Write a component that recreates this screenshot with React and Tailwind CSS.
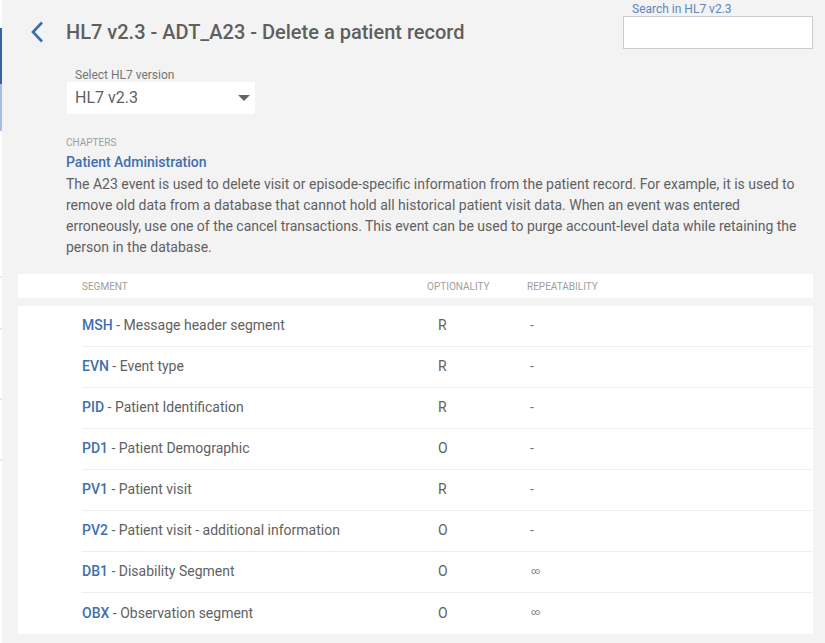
import React from 'react';

const segments = [
  { code: 'MSH', name: 'Message header segment', opt: 'R', rep: '-' },
  { code: 'EVN', name: 'Event type', opt: 'R', rep: '-' },
  { code: 'PID', name: 'Patient Identification', opt: 'R', rep: '-' },
  { code: 'PD1', name: 'Patient Demographic', opt: 'O', rep: '-' },
  { code: 'PV1', name: 'Patient visit', opt: 'R', rep: '-' },
  { code: 'PV2', name: 'Patient visit - additional information', opt: 'O', rep: '-' },
  { code: 'DB1', name: 'Disability Segment', opt: 'O', rep: '∞' },
  { code: 'OBX', name: 'Observation segment', opt: 'O', rep: '∞' },
];

function SideStrip() {
  return (
    <div className="w-[2px] shrink-0 bg-white flex flex-col">
      <div className="h-[28px]" />
      <div className="h-[56px] bg-[#3463a8]" />
      <div className="h-[47px] bg-[#a6bfe0]" />
      <div className="h-[145px]" />
      <div className="h-[2px] bg-[#e6e6e6]" />
      <div className="h-[50px]" />
      <div className="h-[2px] bg-[#e6e6e6]" />
      <div className="h-[68px]" />
      <div className="h-[2px] bg-[#e6e6e6]" />
      <div className="h-[59px]" />
      <div className="h-[2px] bg-[#e6e6e6]" />
    </div>
  );
}

export default function App() {
  return (
    <div
      className="flex w-[825px] h-[643px] overflow-hidden bg-[#f3f3f3] text-[#616161]"
      style={{ fontFamily: 'Roboto, "Liberation Sans", sans-serif' }}
    >
      <SideStrip />
      <div className="flex-1 flex flex-col">
        <div className="flex justify-between items-start">
          <div className="flex flex-col">
            <div className="flex items-center h-[28px] mt-[18px] pl-[27px]">
              <svg width="15" height="22" viewBox="0 0 15 22" className="text-[#3d6aa8]">
                <polyline points="13,1.5 4,11 13,20.5" fill="none" stroke="currentColor" strokeWidth="2.6" />
              </svg>
              <h1 className="ml-[22px] text-[20px] font-medium text-[#5f5f5f] leading-[28px]">
                HL7 v2.3 - ADT_A23 - Delete a patient record
              </h1>
            </div>
            <div className="ml-[65px] mt-[22px]">
              <div className="pl-2 text-[12px] leading-[14px] text-[#757575]">Select HL7 version</div>
              <div className="w-[188px] h-[32px] bg-white flex items-center justify-between pl-2 pr-[5px]">
                <span className="text-[16px] text-[#5f5f5f]">HL7 v2.3</span>
                <svg width="12" height="6" viewBox="0 0 12 6">
                  <polygon points="0,0 12,0 6,6" fill="#666" />
                </svg>
              </div>
            </div>
          </div>
          <div className="w-[190px] mr-3 mt-[2px]">
            <div className="pl-[9px] text-[12px] leading-[14px] text-[#5b86c4]">Search in HL7 v2.3</div>
            <div className="h-[33px] bg-white border border-[#cccccc]" />
          </div>
        </div>

        <div className="ml-[64px] mt-[23px] w-[735px]">
          <div className="text-[10px] leading-[12px] uppercase text-[#9e9e9e]">Chapters</div>
          <div className="mt-[3px] text-[14px] leading-[20px] font-medium text-[#3f6fb0]">Patient Administration</div>
          <p className="mt-[2px] text-[14px] leading-[21px] text-[#616161]">
            The A23 event is used to delete visit or episode-specific information from the patient record. For example, it is used to remove old data from a database that cannot hold all historical patient visit data. When an event was entered erroneously, use one of the cancel transactions. This event can be used to purge account-level data while retaining the person in the database.
          </p>
        </div>

        <div className="ml-4 mr-3 mt-[16px]">
          <div className="h-[24px] bg-white flex items-center pl-[64px] text-[10px] uppercase text-[#9e9e9e]">
            <div className="w-[345px]">Segment</div>
            <div className="w-[100px]">Optionality</div>
            <div>Repeatability</div>
          </div>
          <div className="mt-2 bg-white pl-[64px]">
            {segments.map((s, i) => (
              <div
                key={s.code}
                className={
                  'h-[41px] flex items-center pb-[1px] text-[14px] ' +
                  (i < segments.length - 1 ? 'border-b border-[#eeeeee]' : '')
                }
              >
                <div className="w-[345px]">
                  <span className="font-medium text-[#3f6fb0]">{s.code}</span>
                  <span className="text-[#616161]"> - {s.name}</span>
                </div>
                <div className="w-[100px] pl-[11px] text-[#616161]">{s.opt}</div>
                <div className={s.rep === '∞' ? 'pl-[4px] text-[9px] text-[#757575]' : 'pl-[3px] text-[#757575]'}>{s.rep}</div>
              </div>
            ))}
          </div>
        </div>
      </div>
    </div>
  );
}
